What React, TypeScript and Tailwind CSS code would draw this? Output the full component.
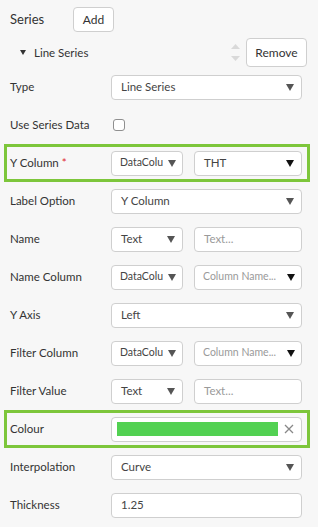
import React from "react";

const font = { fontFamily: 'Lato, "Open Sans", Arial, sans-serif' };

function Arrow({ dark = false }: { dark?: boolean }) {
  return (
    <svg width="8" height="7" viewBox="0 0 8 7" className="shrink-0">
      <path d="M0 0 H8 L4 7 Z" fill={dark ? "#111" : "#555"} />
    </svg>
  );
}

function Select({ value, w, dark = false, placeholder = false, small = false }: { value: string; w: string; dark?: boolean; placeholder?: boolean; small?: boolean }) {
  return (
    <div className={`${w} h-[25px] flex items-center justify-between rounded-[4px] border border-[#cfcfcf] bg-white ${small ? "pl-[8px] pr-[6px]" : "pl-[9px] pr-[7px]"} gap-[2px]`}>
      <span className={`whitespace-nowrap ${small ? "text-[10.5px]" : "text-[11.5px]"} ${placeholder ? "text-[#9a9a9a]" : "text-[#444]"}`}>{value}</span>
      <Arrow dark={dark} />
    </div>
  );
}

function Input({ value, w, placeholder = false }: { value: string; w: string; placeholder?: boolean }) {
  return (
    <div className={`${w} h-[25px] flex items-center rounded-[4px] border border-[#cfcfcf] bg-white pl-[9px]`}>
      <span className={`text-[11.5px] ${placeholder ? "text-[#9a9a9a]" : "text-[#444]"}`}>{value}</span>
    </div>
  );
}

function Row({ label, children, hl = false, req = false }: { label: string; children: React.ReactNode; hl?: boolean; req?: boolean }) {
  return (
    <div className={`ml-[4px] w-[306px] h-[38px] flex items-center border-[3px] ${hl ? "border-[#7dc63b]" : "border-transparent"} pl-[3px]`}>
      <div className="w-[101px] shrink-0 text-[11.5px] text-[#333]">
        {label}
        {req && <span className="text-[#e0282e] ml-[3px]">*</span>}
      </div>
      <div className="flex items-center gap-[11px]">{children}</div>
    </div>
  );
}

export default function App() {
  return (
    <div style={font} className="w-[318px] h-[527px] bg-[#f7f7f7] overflow-hidden">
      <div className="flex items-center h-[25px] mt-[7px] pl-[10px]">
        <span className="text-[13px] text-[#333] w-[63px]">Series</span>
        <div className="h-[25px] w-[41px] flex items-center justify-center rounded-[4px] border border-[#cfcfcf] bg-white text-[12px] text-[#333]">Add</div>
      </div>
      <div className="flex items-center h-[29px] mt-[6px] pl-[20px] pr-[11px]">
        <svg width="6" height="5" viewBox="0 0 6 5" className="mr-[8px]">
          <path d="M0 0 H6 L3 5 Z" fill="#333" />
        </svg>
        <span className="text-[11.5px] text-[#333]">Line Series</span>
        <div className="ml-auto flex items-center gap-[6px]">
          <div className="flex flex-col gap-[7px]">
            <svg width="9" height="5" viewBox="0 0 9 5"><path d="M0 5 L4.5 0 L9 5 Z" fill="#d9d9d9" /></svg>
            <svg width="9" height="5" viewBox="0 0 9 5"><path d="M0 0 H9 L4.5 5 Z" fill="#d9d9d9" /></svg>
          </div>
          <div className="h-[29px] w-[61px] flex items-center justify-center rounded-[4px] border border-[#cfcfcf] bg-white text-[12px] text-[#333]">Remove</div>
        </div>
      </div>
      <div className="mt-[1px]">
        <Row label="Type"><Select value="Line Series" w="w-[191px]" /></Row>
        <Row label="Use Series Data">
          <div className="ml-[2px] w-[12px] h-[12px] rounded-[3px] border border-[#8f8f8f] bg-white" />
        </Row>
        <Row label="Y Column" hl req>
          <Select value="DataColu" w="w-[72px]" small />
          <Select value="THT" w="w-[108px]" dark />
        </Row>
        <Row label="Label Option"><Select value="Y Column" w="w-[191px]" /></Row>
        <Row label="Name">
          <Select value="Text" w="w-[72px]" />
          <Input value="Text..." w="w-[108px]" placeholder />
        </Row>
        <Row label="Name Column">
          <Select value="DataColu" w="w-[72px]" small />
          <Select value="Column Name..." w="w-[108px]" dark placeholder small />
        </Row>
        <Row label="Y Axis"><Select value="Left" w="w-[191px]" /></Row>
        <Row label="Filter Column">
          <Select value="DataColu" w="w-[72px]" small />
          <Select value="Column Name..." w="w-[108px]" dark placeholder small />
        </Row>
        <Row label="Filter Value">
          <Select value="Text" w="w-[72px]" />
          <Input value="Text..." w="w-[108px]" placeholder />
        </Row>
        <Row label="Colour" hl>
          <div className="w-[191px] h-[25px] flex items-center rounded-[4px] border border-[#cfcfcf] bg-white pl-[5px] pr-[7px]">
            <div className="w-[161px] h-[14px] bg-[#52d152]" />
            <svg width="10" height="10" viewBox="0 0 10 10" className="ml-auto">
              <path d="M1 1 L9 9 M9 1 L1 9" stroke="#888" strokeWidth="1.3" />
            </svg>
          </div>
        </Row>
        <Row label="Interpolation"><Select value="Curve" w="w-[191px]" /></Row>
        <Row label="Thickness"><Input value="1.25" w="w-[191px]" /></Row>
      </div>
    </div>
  );
}
